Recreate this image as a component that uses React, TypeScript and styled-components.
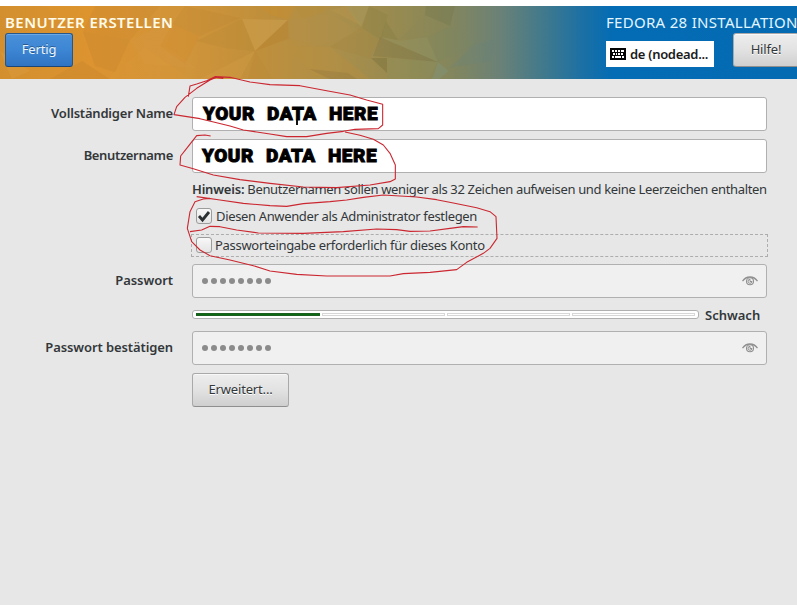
import React from "react";
import styled, { createGlobalStyle } from "styled-components";

const GlobalStyle = createGlobalStyle`
  * { box-sizing: border-box; }
  body {
    margin: 0;
    background: #e7e7e7;
    color: #33373a;
    font: 13px/18px "Noto Sans", sans-serif;
    overflow: hidden;
  }
  button { font: inherit; color: inherit; }
`;

const Page = styled.div`
  position: relative;
  width: 797px;
  height: 605px;
  overflow: hidden;
  border-top: 6px solid #fff;
  background: #e7e7e7;
`;

const Header = styled.header`
  position: relative;
  height: 73px;
  display: flex;
  justify-content: space-between;
  background: linear-gradient(90deg, #d38f2e 0, #dc9330 90px, #d0943a 190px, #c08f3b 260px, #ad8f49 330px, #968a51 400px, #84865c 450px, #6b8177 500px, #447a8a 540px, #1c70a4 582px, #046cb4 612px, #046bb3 100%);
`;

const Mesh = styled.svg`
  position: absolute;
  inset: 0;
  opacity: 0.65;
`;

const HeaderSide = styled.div<{ $width?: number }>`
  position: relative;
  flex: none;
  width: ${(p) => (p.$width ? `${p.$width}px` : "auto")};
  padding: 6px 0 0 ${(p) => (p.$width ? 0 : 5)}px;
`;

const Title = styled.h1<{ $weight: number; $spacing: number }>`
  margin: 0;
  height: 21px;
  white-space: nowrap;
  color: ${(p) => (p.$weight > 400 ? "#fffbe9" : "#e3f6ff")};
  font-size: 15px;
  line-height: 20px;
  font-weight: ${(p) => p.$weight};
  letter-spacing: ${(p) => p.$spacing}px;
`;

const Button = styled.button<{ $primary?: boolean; $width: number }>`
  display: block;
  flex: none;
  width: ${(p) => p.$width}px;
  height: 34px;
  padding: 0 0 2px;
  border: 1px solid ${(p) => (p.$primary ? "#275788" : "#a9a9a9")};
  border-bottom-color: ${(p) => (p.$primary ? "#1e4674" : "#8f8f8f")};
  border-radius: 3px;
  color: ${(p) => (p.$primary ? "#eaf6ff" : "#33373a")};
  background: ${(p) =>
    p.$primary
      ? "linear-gradient(#4a90d9, #3d86d4 50%, #2f74c2)"
      : "linear-gradient(#ededed, #e2e2e2 50%, #cfcfcf)"};
  box-shadow: inset 0 1px ${(p) => (p.$primary ? "#6ba9e6" : "#f8f8f8")};
  text-shadow: ${(p) => (p.$primary ? "0 -1px rgba(0, 0, 0, 0.35)" : "0 1px #fff")};
  letter-spacing: -0.15px;
`;

const HeaderTools = styled.div`
  display: flex;
  width: 201px;
`;

const Keyboard = styled.div`
  display: flex;
  align-items: center;
  width: 108px;
  height: 26px;
  margin: 8px 19px 0 0;
  padding: 0 0 1px 4px;
  gap: 4px;
  flex: none;
  background: #fff;
  color: #1b1b1b;
  font-weight: 600;
  letter-spacing: -0.3px;
  white-space: nowrap;
`;

const Form = styled.main`
  display: flex;
  flex-direction: column;
  padding-top: 18px;
`;

const Row = styled.div<{ $height: number; $after?: number }>`
  display: grid;
  grid-template-columns: 173px 576px;
  grid-template-rows: 100%;
  column-gap: 19px;
  align-items: center;
  height: ${(p) => p.$height}px;
  margin-bottom: ${(p) => p.$after ?? 0}px;
`;

const Label = styled.label<{ $spacing: number }>`
  grid-column: 1;
  text-align: right;
  font-weight: 600;
  white-space: nowrap;
  letter-spacing: ${(p) => p.$spacing}px;
  padding-bottom: 2px;
`;

const Field = styled.div<{ $disabled?: boolean }>`
  grid-column: 2;
  display: flex;
  align-items: center;
  justify-content: space-between;
  width: 575px;
  height: 34px;
  padding: 0 8px 0 9px;
  border: 1px solid #b0b0b0;
  border-radius: 3px;
  background: ${(p) => (p.$disabled ? "#f0f0f0" : "#fff")};
`;

const Sample = styled.span<{ $shift: number }>`
  padding-left: ${(p) => p.$shift}px;
  color: #000;
  font: 900 19px/32px Roboto, sans-serif;
  letter-spacing: 0.5px;
  word-spacing: 7px;
  white-space: nowrap;
  -webkit-text-stroke: 0.9px #000;
`;

const Dots = styled.span`
  display: flex;
  gap: 3px;
  padding: 0 0 1px;
`;

const Dot = styled.i`
  width: 6px;
  height: 6px;
  border-radius: 50%;
  background: #8b8b8b;
`;

const Hint = styled.p`
  grid-column: 2;
  margin: 0;
  white-space: nowrap;
  letter-spacing: -0.345px;
`;

const Strong = styled.b`
  font-weight: 600;
  letter-spacing: -0.2px;
`;

const CheckRow = styled.label<{ $focus?: boolean }>`
  grid-column: 2;
  display: flex;
  align-items: center;
  gap: ${(p) => (p.$focus ? 3 : 4)}px;
  width: 577px;
  height: 23px;
  margin-left: -1px;
  padding: 0 0 2px 4px;
  border: 1px ${(p) => (p.$focus ? "dashed #adadad" : "solid transparent")};
  white-space: nowrap;
  letter-spacing: ${(p) => (p.$focus ? -0.3 : -0.35)}px;
`;

const Box = styled.span`
  display: block;
  flex: none;
  width: 16px;
  height: 16px;
  border: 1px solid #9c9c9c;
  border-radius: 3px;
  background: linear-gradient(#f8f8f8, #e4e4e4);

  svg { display: block; overflow: visible; }
`;

const MeterRow = styled.div`
  grid-column: 2;
  display: flex;
  align-items: center;
  gap: 6px;
  height: 9px;
`;

const Meter = styled.div`
  display: grid;
  grid-template-columns: 124px 123px 123px 123px;
  gap: 2px;
  width: 507px;
  height: 9px;
  padding: 2px;
  padding-left: 3px;
  border: 1px solid #b0b0b0;
  border-radius: 3px;
  background: #fff;
`;

const Segment = styled.i<{ $on?: boolean }>`
  height: 3px;
  border: 1px solid ${(p) => (p.$on ? "#1b5e20" : "#d7d7d7")};
  background: ${(p) => (p.$on ? "#0b6b12" : "#fff")};
`;

const Strength = styled.strong`
  font-weight: 600;
  line-height: 18px;
`;

const Slot = styled.div`
  grid-column: 2;
`;

const Scribble = styled.svg`
  position: absolute;
  left: 0;
  top: -6px;
  pointer-events: none;
`;

const facets: [string, string, number][] = [
  ["0,0 45,0 80,31 95,0 0,0", "#e39a2c", 0.35],
  ["95,0 160,0 130,34 83,26", "#c17f2d", 0.25],
  ["83,26 130,34 115,66 95,60", "#ba7d30", 0.3],
  ["130,34 178,12 165,40 196,62 145,58", "#d99f4a", 0.35],
  ["50,73 82,55 110,73", "#b77927", 0.3],
  ["0,45 30,65 12,73 6,60", "#e0a751", 0.4],
  ["115,66 145,42 190,73 108,73", "#dd9a3c", 0.4],
  ["185,0 240,12 200,30 172,18", "#b98130", 0.3],
  ["172,18 200,30 185,58 160,40", "#d58a29", 0.35],
  ["242,13 288,14 255,45", "#d1a253", 0.7],
  ["288,14 290,32 255,45", "#b77f2c", 0.55],
  ["196,35 242,13 255,45 225,42", "#b98a32", 0.45],
  ["255,45 200,73 240,73", "#d7a14b", 0.45],
  ["255,45 272,73 248,73", "#b88735", 0.4],
  ["288,14 330,8 362,26 320,40 288,32", "#b3924d", 0.45],
  ["260,0 295,0 288,14 268,8", "#cf8e28", 0.5],
  ["295,0 330,0 325,6 302,13", "#bd8b35", 0.4],
  ["330,4 346,0 362,20", "#b8974e", 0.65],
  ["346,0 369,0 361,21", "#aaa065", 0.55],
  ["369,0 388,9 381,34 362,22", "#817a3d", 0.35],
  ["286,40 330,41 370,73 315,70", "#bc903e", 0.5],
  ["362,21 380,35 370,52 330,41", "#a68540", 0.5],
  ["309,63 348,67 357,73 330,73", "#92753b", 0.5],
  ["380,31 399,35 427,31 438,56", "#8f9668", 0.55],
  ["380,31 438,56 396,52 373,50", "#756f41", 0.4],
  ["386,15 398,34 381,31", "#7d7740", 0.45],
  ["426,0 455,0 450,20 425,9", "#72764c", 0.5],
  ["425,9 451,20 430,30 398,34", "#8c8758", 0.5],
  ["371,52 387,52 387,67", "#76703a", 0.6],
  ["387,52 438,56 428,73 387,73", "#8e935e", 0.45],
  ["438,56 449,65 439,73 432,73", "#80977e", 0.65],
  ["427,31 438,56 475,38 451,20", "#7c8964", 0.35],
  ["475,38 495,34 490,55 449,62", "#648483", 0.3],
];

const stroke = { fill: "none", stroke: "#cb2730", strokeWidth: 3.3, strokeLinejoin: "round" as const };

const KeyboardIcon = () => (
  <svg width="16" height="12" viewBox="0 0 16 12" shapeRendering="crispEdges">
    <rect width="16" height="12" fill="#050505" />
    <path d="M2 2.500h2M5 2.500h2M8 2.500h2M11 2.500h3M3 5.500h2M6 5.500h1M8 5.500h2M11 5.500h2M2 8.500h2M5 8.500h6M12 8.500h2" stroke="#fff" strokeWidth="2" />
  </svg>
);

const EyeIcon = () => (
  <svg width="16" height="12" viewBox="0 0 16 12" fill="none" stroke="#8f8f8f">
    <path d="M.5 6.2Q3.400 2 8 2t7.500 4.200" strokeWidth="1.300" />
    <circle cx="8" cy="6.300" r="3.500" strokeWidth="1.100" />
    <path d="M8 4.300v2.200h2A2 2 0 1 1 8 4.300" strokeWidth="1" />
  </svg>
);

const PasswordField = () => (
  <Field $disabled>
    <Dots>{Array.from({ length: 8 }, (_, i) => <Dot key={i} />)}</Dots>
    <EyeIcon />
  </Field>
);

export default function App() {
  return (
    <>
      <GlobalStyle />
      <Page>
        <Header>
          <Mesh width="797" height="73">
            {facets.map(([points, fill, opacity]) => (
              <polygon key={points} points={points} fill={fill} opacity={opacity} />
            ))}
          </Mesh>
          <HeaderSide>
            <Title $weight={600} $spacing={0.45}>BENUTZER ERSTELLEN</Title>
            <Button $primary $width={68}>Fertig</Button>
          </HeaderSide>
          <HeaderSide $width={191}>
            <Title $weight={400} $spacing={0.3}>FEDORA 28 INSTALLATION</Title>
            <HeaderTools>
              <Keyboard><KeyboardIcon />de (nodead...</Keyboard>
              <Button $width={66}>Hilfe!</Button>
            </HeaderTools>
          </HeaderSide>
        </Header>
        <Form>
          <Row $height={34} $after={8}>
            <Label $spacing={-0.2}>Vollständiger Name</Label>
            <Field><Sample $shift={1}>YOUR DATA HERE</Sample></Field>
          </Row>
          <Row $height={34} $after={7}>
            <Label $spacing={-0.35}>Benutzername</Label>
            <Field><Sample $shift={0}>YOUR DATA HERE</Sample></Field>
          </Row>
          <Row $height={18} $after={7}>
            <Hint><Strong>Hinweis:</Strong> Benutzernamen sollen weniger als 32 Zeichen aufweisen und keine Leerzeichen enthalten</Hint>
          </Row>
          <Row $height={23} $after={6}>
            <CheckRow>
              <Box>
                <svg width="14" height="14"><path d="M2 7l3.500 4L12 3" fill="none" stroke="#2c3032" strokeWidth="2.800" /></svg>
              </Box>
              Diesen Anwender als Administrator festlegen
            </CheckRow>
          </Row>
          <Row $height={23} $after={7}>
            <CheckRow $focus><Box />Passworteingabe erforderlich für dieses Konto</CheckRow>
          </Row>
          <Row $height={34} $after={12}>
            <Label $spacing={-0.05}>Passwort</Label>
            <PasswordField />
          </Row>
          <Row $height={9} $after={12}>
            <MeterRow>
              <Meter><Segment $on /><Segment /><Segment /><Segment /></Meter>
              <Strength>Schwach</Strength>
            </MeterRow>
          </Row>
          <Row $height={34} $after={8}>
            <Label $spacing={-0.1}>Passwort bestätigen</Label>
            <PasswordField />
          </Row>
          <Row $height={34}>
            <Slot><Button $width={97}>Erweitert...</Button></Slot>
          </Row>
        </Form>
        <Scribble width="797" height="605">
          <path d="M297 120v5" stroke="#111" strokeWidth="2" />
          <g transform="translate(160 70) scale(.33333)" {...stroke}>
            <path d="M85 80L90 48 110 42 140 32 165 20 210 22 270 36 330 44 420 47 500 62 570 75 620 90 668 103V165L655 176 585 178 550 184 500 190 440 200 380 200 330 192 290 186 250 180 210 168 170 158 120 146 42 134 50 110 75 82 110 55 150 30 170 22 190 25" />
            <path d="M152 198L135 195 110 197 80 235 62 258 60 285 100 296 160 315 240 329 330 340 430 351 530 353 630 345 690 335 706 327V285L690 250 670 225 640 208 600 196 555 186" />
          </g>
          <g transform="translate(170 175) scale(.33333)" {...stroke}>
            <path d="M80 65L150 75 220 85 300 92 350 94 400 86 480 80 530 75 580 67 640 60 740 66 800 74 850 84 920 98 960 110 978 125 981 190 960 220 940 235 890 262 860 284 780 292 700 296 660 303 470 303 380 298 300 288 250 272 180 255 120 242 90 225 65 200 52 160 60 110 75 80 100 72 120 70" />
            <path d="M60 170L95 165 120 154 150 155 200 165 265 174 400 175 520 170 620 162 680 164 720 169 780 168 840 160 880 155 923 156" />
          </g>
        </Scribble>
      </Page>
    </>
  );
}
